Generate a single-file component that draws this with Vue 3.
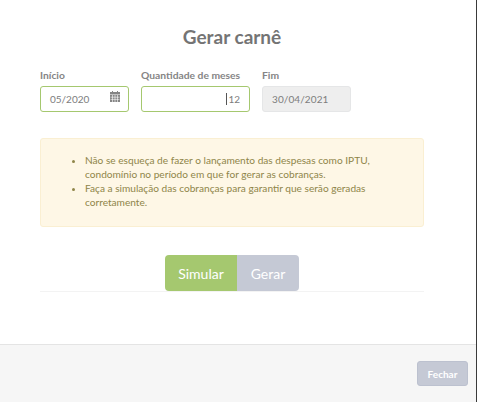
<template>
  <div class="page">
    <div class="modal">
      <div class="body">
        <h4 class="title">Gerar carnê</h4>
        <div class="fields">
          <div class="field start">
            <label>Início</label>
            <div class="input active">
              <span>05/2020</span>
              <svg class="calendar" width="10" height="11" viewBox="0 0 10 11">
                <path fill="#858585" d="M2 0h1v1.5H2zM7 0h1v1.5H7zM0 1h10v2.4H0zM0 4h10v7H0z" />
                <path stroke="#fff" stroke-width=".6" d="M.5 6.2h9M.5 8.4h9M2.5 4v7M5 4v7M7.5 4v7" />
              </svg>
            </div>
          </div>
          <div class="field months">
            <label>Quantidade de meses</label>
            <div class="input active right">
              <span class="caret"></span><span>12</span>
            </div>
          </div>
          <div class="field end">
            <label>Fim</label>
            <div class="input disabled">30/04/2021</div>
          </div>
        </div>
        <div class="alert">
          <ul>
            <li v-for="tip in tips" :key="tip">{{ tip }}</li>
          </ul>
        </div>
        <div class="actions">
          <button class="btn simulate">Simular</button>
          <button class="btn generate">Gerar</button>
        </div>
        <div class="rule"></div>
      </div>
      <div class="footer">
        <button class="close">Fechar</button>
      </div>
    </div>
  </div>
</template>

<script setup>
const tips = [
  "Não se esqueça de fazer o lançamento das despesas como IPTU, condomínio no período em que for gerar as cobranças.",
  "Faça a simulação das cobranças para garantir que serão geradas corretamente.",
];
</script>

<style>
html,
body {
  margin: 0;
  background: white;
}
</style>

<style scoped>
.page {
  width: 478px;
  height: 402px;
  background: white;
  font-family: Lato, "Open Sans", sans-serif;
  overflow: hidden;
}

.modal {
  box-sizing: border-box;
  width: 477px;
  height: 402px;
  background: white;
  border-right: 1px solid #3a3a3a;
  display: flex;
  flex-direction: column;
}

.body {
  flex: 1;
  padding: 0 52px 0 40px;
}

.title {
  margin: 0;
  padding-top: 26px;
  height: 21px;
  line-height: 21px;
  text-align: center;
  font-size: 19px;
  font-weight: 700;
  color: #747474;
}

.fields {
  display: flex;
  gap: 12px;
  margin-top: 21px;
}

.field label {
  display: block;
  height: 14px;
  line-height: 14px;
  margin-bottom: 4px;
  font-size: 10.3px;
  font-weight: 700;
  color: #858585;
}

.start {
  width: 89px;
}

.months {
  width: 109px;
}

.end {
  width: 89px;
}

.input {
  box-sizing: border-box;
  height: 26px;
  display: flex;
  align-items: center;
  padding: 0 9px;
  border: 1px solid #e5e6e7;
  border-radius: 3px;
  font-size: 10px;
  color: #7d7d7d;
}

.active {
  border-color: #a5c86f;
}

.start .input {
  justify-content: space-between;
  padding-right: 8px;
}

.calendar {
  margin-top: -5px;
}

.right {
  justify-content: flex-end;
  padding-right: 9px;
}

.caret {
  width: 1px;
  height: 12px;
  background: #555;
  margin-right: 1px;
}

.disabled {
  background: #eee;
  letter-spacing: 0.1px;
}

.alert {
  margin-top: 26px;
  box-sizing: border-box;
  width: 384px;
  height: 89px;
  padding: 14px 14px;
  background: #fef7e6;
  border: 1px solid #faefd2;
  border-radius: 3px;
  color: #8f8549;
  font-size: 10.15px;
  line-height: 14px;
}

.alert ul {
  margin: 0;
  padding-left: 30px;
}

.actions {
  display: flex;
  justify-content: center;
  width: 384px;
  margin-top: 28px;
}

.btn {
  height: 36px;
  border: 0;
  padding: 0;
  font-family: inherit;
  font-size: 14px;
  font-weight: 400;
  color: white;
}

.simulate {
  width: 72px;
  background: #a5c86f;
  border-radius: 4px 0 0 4px;
}

.generate {
  width: 62px;
  background: #c5c9d5;
  border-radius: 0 4px 4px 0;
}

.rule {
  width: 384px;
  height: 1px;
  background: #f3f3f3;
}

.footer {
  box-sizing: border-box;
  height: 58px;
  padding: 16px 8px 0 0;
  display: flex;
  justify-content: flex-end;
  align-items: flex-start;
  background: #f6f6f6;
  border-top: 1px solid #e4e4e4;
}

.close {
  width: 51px;
  height: 25px;
  padding: 0;
  border: 1px solid #bcc1cf;
  border-radius: 3px;
  background: #c5c9d5;
  color: white;
  font-family: inherit;
  font-size: 10px;
  font-weight: 700;
}
</style>
